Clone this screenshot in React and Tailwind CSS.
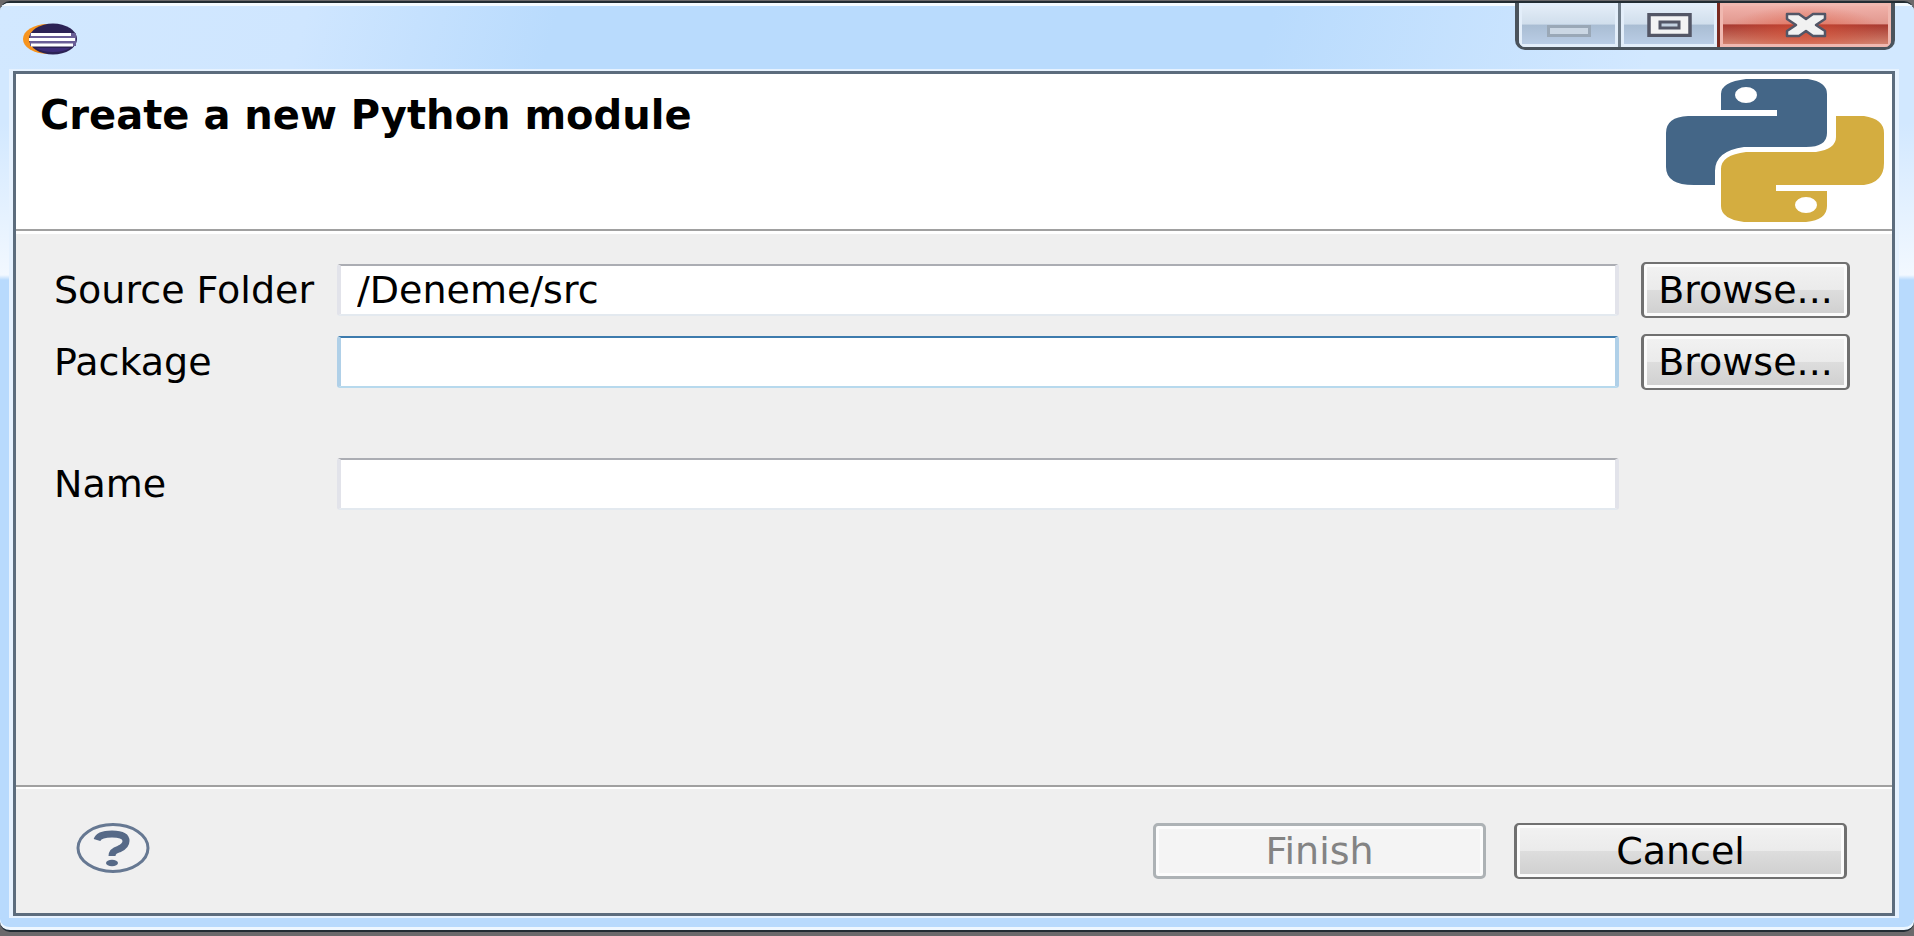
const label = "text-[38px] leading-[44px] whitespace-nowrap text-black";
const fieldBase = "h-[52px] w-full min-w-0 rounded-[3px] border-x-4 border-y-2 bg-white px-4 text-[38px] leading-[44px] text-black outline-none";
const field = fieldBase + " border-t-[#abadb3] border-x-[#e2e3ea] border-b-[#e3e9ef]";
const focusField = fieldBase + " border-t-[#3d7bad] border-x-[#b0d0e8] border-b-[#b7d9ed]";
const pushButton =
  "flex h-[56px] items-center justify-center rounded-[5px] border-x-[3px] border-y-2 border-[#707070] bg-[linear-gradient(#f2f2f2_0%,#ebebeb_49%,#dddddd_50%,#cfcfcf_100%)] text-[38px] leading-[44px] text-black shadow-[inset_0_0_0_3px_#fbfbfb]";

function EclipseIcon() {
  return (
    <svg viewBox="0 0 56 32" className="h-8 w-14 shrink-0" aria-hidden="true">
      <ellipse cx="25" cy="16" rx="24" ry="15" fill="#f7941e" />
      <ellipse cx="31" cy="16" rx="24" ry="15.5" fill="#2c2255" />
      <path d="M14 25h34q-6 4-17 4t-17-4z" fill="#3d2c78" />
      <path d="M8 10h46v13H8z" fill="#6a5e96" />
      <path d="M9 11.500h40M7 16.500h46M9 22h42" stroke="#ffffff" strokeWidth="3" />
    </svg>
  );
}

function PythonLogo() {
  return (
    <svg viewBox="0 0 218 143" className="h-[143px] w-[218px] shrink-0" aria-hidden="true">
      <path fill="#446687" d="M80 0H142Q161 3 161 15V54Q161 68 140 68H78Q49 72 49 92V106H28Q0 106 0 88V54Q0 38 22 37H111V31H55V15Q55 3 80 0Z" />
      <ellipse cx="80" cy="16" rx="11" ry="8" fill="#fff" />
      <path fill="#d4ad40" d="M170 37H198Q218 40 218 54V84Q218 103 198 106H110V112H161V127Q161 141 140 143H78Q55 140 55 127V90Q55 76 80 73H150Q170 70 170 58Z" />
      <ellipse cx="140" cy="126" rx="11" ry="8" fill="#fff" />
    </svg>
  );
}

function WindowControls() {
  return (
    <div className="mr-[19px] flex h-[47px] w-[380px] shrink-0 overflow-hidden rounded-b-[10px] border-x-4 border-b-[3px] border-[#4a535c]">
      <button type="button" aria-label="Minimize" className="flex flex-1 items-center justify-center border-r-[3px] border-[#6f7c89] bg-[linear-gradient(#e6eff9_0%,#d0deec_48%,#a9bdd3_50%,#bccfe8_100%)] shadow-[inset_0_0_0_3px_#e3eefa]">
        <svg viewBox="0 0 44 12" className="mt-3 h-3 w-11"><rect x="1.500" y="1.500" width="41" height="9" fill="#cbd7e4" stroke="#9aa8b7" strokeWidth="3" /></svg>
      </button>
      <button type="button" aria-label="Maximize" className="flex w-[99px] items-center justify-center border-r-[3px] border-[#7a2a20] bg-[linear-gradient(#e6eff9_0%,#d0deec_48%,#a9bdd3_50%,#bccfe8_100%)] shadow-[inset_0_0_0_3px_#e3eefa]">
        <svg viewBox="0 0 45 24" className="h-6 w-[45px]">
          <rect x="2" y="1.500" width="41" height="21" fill="#f3f3f4" stroke="#535666" strokeWidth="3.500" />
          <rect x="13" y="9" width="19" height="6" fill="#c3d1e0" stroke="#535666" strokeWidth="3" />
        </svg>
      </button>
      <button type="button" aria-label="Close" className="flex w-[171px] items-center justify-center bg-[radial-gradient(ellipse_at_50%_65%,#e0503299_0%,#a0302800_65%),linear-gradient(#f2b5ae_0%,#e2988f_47%,#a83a31_50%,#d98d78_100%)] shadow-[inset_0_0_0_3px_#f0b8b0]">
        <svg viewBox="0 0 42 26" className="h-[26px] w-[42px]">
          <path d="M2 2H14L21 7L28 2H40V7L31 13L40 19V24H28L21 19L14 24H2V19L11 13L2 7Z" fill="#f1f1f1" stroke="#535666" strokeWidth="2.500" strokeLinejoin="round" />
        </svg>
      </button>
    </div>
  );
}

export default function App() {
  return (
    <div className="flex min-h-screen flex-col bg-[#6b696b] pt-px pb-1 font-['DejaVu_Sans',sans-serif]">
      <div className="flex flex-1 flex-col overflow-hidden rounded-[10px] border-y-2 border-[#222c33] bg-[linear-gradient(#d2e8ff_0px,#d2e8ff_120px,#f2f8ff_272px,#b8dafd_277px,#b8dafd_100%)] shadow-[inset_0_3px_0_#f4faff,inset_0_-3px_0_#eef7ff]">
        <header className="flex h-[66px] items-start justify-between bg-[linear-gradient(105deg,#d2e8ff_0%,#cfe6ff_16%,#b9dbfd_29%,#b9dbfd_66%,#d2e8ff_86%)] shadow-[inset_0_3px_0_#f4faff]">
          <div className="pt-5 pl-[22px]"><EclipseIcon /></div>
          <WindowControls />
        </header>
        <main className="mr-[15px] mb-3 ml-[9px] flex flex-1 flex-col border-x-4 border-y-2 border-[#e6f2ff]">
          <div className="flex flex-1 flex-col border-[3px] border-[#5c6c7d] bg-[#efefef]">
            <section className="flex h-[157px] shrink-0 items-start justify-between border-b-2 border-[#a0a0a0] bg-white pt-[5px] pr-[8px] pl-6">
              <h1 className="pt-[14px] text-[40px] leading-[44px] font-bold text-black">Create a new Python module</h1>
              <PythonLogo />
            </section>
            <form className="flex flex-1 flex-col" onSubmit={(e) => e.preventDefault()}>
              <div className="grid flex-1 grid-cols-[261px_minmax(0,1fr)_209px] content-start items-center gap-x-[22px] border-t-[3px] border-white pt-7 pr-[42px] pl-[38px]">
                <label htmlFor="source" className={label}>Source Folder</label>
                <input id="source" defaultValue="/Deneme/src" className={field} />
                <button type="button" className={pushButton}>Browse...</button>
                <label htmlFor="package" className={label + " mt-4"}>Package</label>
                <input id="package" className={focusField + " mt-4"} />
                <button type="button" className={pushButton + " mt-4"}>Browse...</button>
                <label htmlFor="name" className={label + " mt-[68px]"}>Name</label>
                <input id="name" className={field + " mt-[68px]"} />
              </div>
              <div className="flex h-[128px] shrink-0 items-start justify-between border-t-2 border-[#a0a0a0] pr-[45px] pl-[60px] shadow-[inset_0_2px_0_#ffffff]">
                <button type="button" aria-label="Help" className="mt-9">
                  <svg viewBox="0 0 74 50" className="h-[50px] w-[74px]">
                    <ellipse cx="37" cy="25" rx="35" ry="23.500" fill="#f1f1f2" stroke="#667892" strokeWidth="3" />
                    <path d="M21 17Q23 11 36 11Q50 11 50 18Q50 23 43 26Q36 28 36 33" fill="none" stroke="#566987" strokeWidth="7" />
                    <ellipse cx="36" cy="40" rx="6" ry="3.200" fill="#566987" />
                  </svg>
                </button>
                <div className="mt-9 flex gap-7">
                  <button type="button" disabled className="flex h-[56px] w-[333px] items-center justify-center rounded-[5px] border-[3px] border-[#adb2b5] bg-[#f4f4f4] text-[38px] leading-[44px] text-[#838383] shadow-[inset_0_0_0_3px_#fcfcfc]">Finish</button>
                  <button type="button" className={pushButton + " w-[333px]"}>Cancel</button>
                </div>
              </div>
            </form>
          </div>
        </main>
      </div>
    </div>
  );
}
